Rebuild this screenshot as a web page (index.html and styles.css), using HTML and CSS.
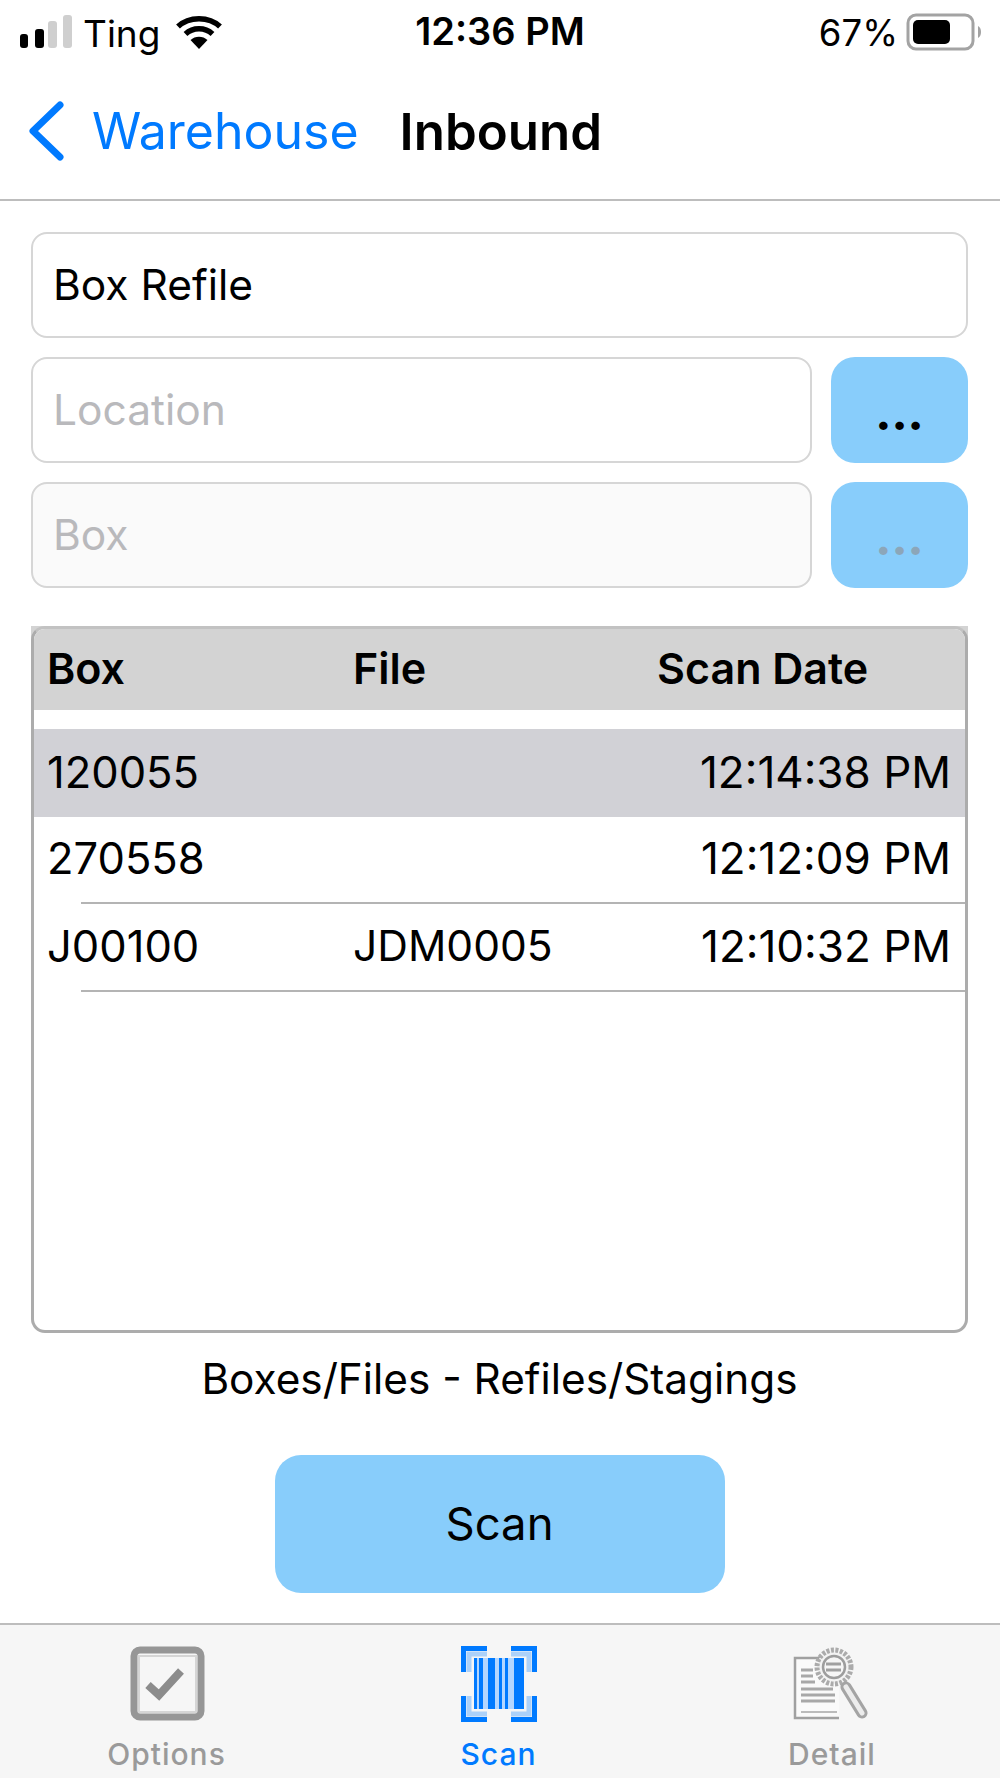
FILE: index.html
```html
<!DOCTYPE html>
<html lang="en">
<head>
<meta charset="utf-8">
<title>Inbound</title>
<link rel="stylesheet" href="styles.css">
</head>
<body>
<div class="screen">
  <header class="status">
    <div class="status-left">
      <svg class="signal" width="54" height="34" viewBox="0 0 54 34"><rect x="0" y="19" width="8" height="14" rx="3" fill="#000"/><rect x="15" y="14" width="9" height="19" rx="3" fill="#000"/><rect x="28" y="6" width="9" height="27" rx="3" fill="#cfcfcf"/><rect x="43" y="0" width="9" height="33" rx="3" fill="#cfcfcf"/></svg>
      <span class="carrier">Ting</span>
      <svg class="wifi" width="46" height="36" viewBox="0 0 46 36"><path d="M2 12.500C13 2 33 2 44 12.500" fill="none" stroke="#000" stroke-width="5.500"/><path d="M9.500 20C17 13 29 13 36.500 20" fill="none" stroke="#000" stroke-width="5.500"/><path d="M14.500 26C19 21.500 27 21.500 31.500 26L23 35Z" fill="#000"/></svg>
    </div>
    <div class="clock">12:36 PM</div>
    <div class="status-right">
      <span class="pct">67%</span>
      <svg class="battery" width="76" height="38" viewBox="0 0 76 38"><rect x="2" y="2" width="65" height="34" rx="8" fill="none" stroke="#a3a3a3" stroke-width="3"/><rect x="7" y="7" width="37" height="24" rx="5" fill="#000"/><path d="M72 13c2 1 3 3 3 6s-1 5-3 6z" fill="#a3a3a3"/></svg>
    </div>
  </header>

  <nav class="navbar">
    <svg class="chevron" width="40" height="60" viewBox="0 0 40 60"><path d="M34 4 7 30l27 26" fill="none" stroke="#007aff" stroke-width="7" stroke-linecap="round" stroke-linejoin="round"/></svg>
    <span class="back">Warehouse</span>
    <span class="title">Inbound</span>
  </nav>

  <main class="content">
    <section class="form">
      <div class="field"><span class="value">Box Refile</span></div>
      <div class="field-row">
        <div class="field grow"><span class="placeholder">Location</span></div>
        <div class="more">...</div>
      </div>
      <div class="field-row">
        <div class="field grow disabled"><span class="placeholder">Box</span></div>
        <div class="more dim">...</div>
      </div>
    </section>

    <section class="table-wrap">
      <div class="table">
        <div class="thead">
          <span>Box</span><span>File</span><span>Scan Date</span>
        </div>
        <div class="row selected">
          <div class="cells"><span>120055</span><span></span><span class="time">12:14:38 PM</span></div>
        </div>
        <div class="row">
          <div class="cells"><span>270558</span><span></span><span class="time">12:12:09 PM</span></div>
          <div class="sep"></div>
        </div>
        <div class="row">
          <div class="cells"><span>J00100</span><span class="file">JDM0005</span><span class="time">12:10:32 PM</span></div>
          <div class="sep"></div>
        </div>
      </div>
    </section>

    <p class="caption">Boxes/Files - Refiles/Stagings</p>
    <div class="scan-btn">Scan</div>
  </main>

  <footer class="tabbar">
    <div class="tab">
      <svg width="76" height="76" viewBox="0 0 76 76"><rect x="5" y="4" width="67" height="67" rx="6" fill="none" stroke="#969696" stroke-width="7"/><rect x="10" y="10" width="57" height="56" fill="none" stroke="#d5d5d5" stroke-width="2"/><path d="M19 39l11 10 22-24" fill="none" stroke="#8c8c8c" stroke-width="8"/></svg>
      <span>Options</span>
    </div>
    <div class="tab active">
      <svg width="76" height="76" viewBox="0 0 76 76"><path d="M26 2.500H2.500V26M50 2.500H73.500V26M26 73.500H2.500V50M50 73.500H73.500V50" fill="none" stroke="#007aff" stroke-width="5"/><path d="M26 8H8V26M50 8H68V26M26 68H8V50M50 68H68V50" fill="none" stroke="#007aff" stroke-opacity=".3" stroke-width="5"/><rect x="13" y="12" width="50" height="51" fill="#b3d6ff"/><g fill="#007aff"><rect x="13" y="12" width="3" height="51"/><rect x="18" y="12" width="4" height="51"/><rect x="27" y="12" width="7" height="51"/><rect x="38" y="12" width="3" height="51"/><rect x="44" y="12" width="3" height="51"/><rect x="53" y="12" width="10" height="51"/></g></svg>
      <span>Scan</span>
    </div>
    <div class="tab">
      <svg width="78" height="76" viewBox="0 0 78 76"><path d="M46 12H2v60h44" fill="#fafafa" stroke="#a0a0a0" stroke-width="2.500"/><path d="M8 24h12M8 30h12M8 36h14M8 43h32M8 49h34M8 55h34" stroke="#a8a8a8" stroke-width="3"/><path d="M8 66h36" stroke="#bbb" stroke-width="2"/><circle cx="41" cy="21" r="17" fill="#f3f3f3" stroke="#ababab" stroke-width="5" stroke-dasharray="3 1.500"/><circle cx="41" cy="21" r="11" fill="#f6f6f6" stroke="#9d9d9d" stroke-width="2.500"/><path d="M33 18h15M33 24h15" stroke="#a0a0a0" stroke-width="3"/><path d="M53 41 69 67" stroke="#a4a4a4" stroke-width="11" stroke-linecap="round"/><path d="M53 41 69 67" stroke="#ececec" stroke-width="5" stroke-linecap="round"/></svg>
      <span>Detail</span>
    </div>
  </footer>
</div>
</body>
</html>
```
FILE: styles.css
```css
* { box-sizing: border-box; }
html, body { margin: 0; padding: 0; background: #fff; }
body { font-family: Inter, "Liberation Sans", sans-serif; color: #000; }
.screen { width: 1000px; height: 1778px; display: flex; flex-direction: column; overflow: hidden; }

.status { height: 66px; flex: none; display: grid; grid-template-columns: 1fr auto 1fr; align-items: center; padding: 0 18px 0 20px; }
.status-left { display: flex; align-items: center; }
.signal { margin: -2px 0 0 0; }
.carrier { font-size: 37px; margin-left: 9px; }
.wifi { margin-left: 16px; margin-top: -2px; }
.clock { font-size: 38px; font-weight: 600; margin: 0 2px 4px 0; }
.status-right { display: flex; align-items: center; justify-content: flex-end; }
.pct { font-size: 36.500px; margin-right: 8px; }
.battery { margin-top: -3px; }

.navbar { height: 135px; flex: none; display: flex; align-items: center; border-bottom: 2px solid #bdbdbd; padding: 0 0 3px 26px; }
.chevron { flex: none; }
.back { font-size: 50px; color: #007aff; margin-left: 26px; }
.title { font-size: 51px; font-weight: 600; margin-left: 41px; }

.content { flex: 1; display: flex; flex-direction: column; padding: 31px 32px 0 31px; }
.form { display: flex; flex-direction: column; gap: 19px; }
.field-row { display: flex; gap: 19px; }
.field { height: 106px; border: 2px solid #d6d6d6; border-radius: 16px; display: flex; align-items: center; padding: 0 20px 1px; font-size: 42.500px; }
.grow { flex: 1; }
.disabled { background: #fafafa; }
.placeholder { color: #b9b9bc; }
.more { width: 137px; height: 106px; background: #88cdfb; border-radius: 24px; display: flex; align-items: flex-end; justify-content: center; padding-bottom: 27px; font-size: 46px; line-height: 1; font-weight: 800; }
.dim { color: #8ca6b9; }

.table-wrap { margin-top: 38px; height: 707px; flex: none; background: linear-gradient(#d3d3d3 16px, transparent 16px); }
.table { height: 100%; border: 3px solid #acacac; border-top-color: #c2c2c2; border-radius: 14px; background: #fff; overflow: hidden; }
.thead, .cells { display: grid; grid-template-columns: 306px 304px 1fr; padding-left: 13px; font-size: 43.500px; align-items: center; }
.thead { height: 81px; background: #d3d3d3; font-weight: 600; margin-bottom: 19px; padding-bottom: 4px; font-size: 43px; }
.row { height: 87.500px; display: flex; flex-direction: column; }
.selected { background: #d1d1d6; }
.cells { flex: 1; padding-bottom: 2px; }
.file { font-size: 42.500px; }
.time { text-align: right; padding-right: 14px; font-size: 44px; }
.sep { height: 2px; margin-left: 47px; background: #b4b4b4; flex: none; }

.caption { margin: 25px 0 0; height: 42px; line-height: 42px; font-size: 42.300px; text-align: center; }
.scan-btn { margin: 55px auto 0; width: 450px; height: 138px; border-radius: 26px; background: #88cdfb; display: flex; align-items: center; justify-content: center; font-size: 45.500px; padding-bottom: 2px; }

.tabbar { height: 155px; flex: none; border-top: 2px solid #bdbdbd; background: #f6f6f6; display: grid; grid-template-columns: 333px 331px 336px; padding-top: 21px; }
.tab { display: flex; flex-direction: column; align-items: center; color: #9a9a9a; font-size: 30px; letter-spacing: 1px; font-weight: 500; }
.tab span { margin-top: 15px; line-height: 34px; }
.tab svg { display: block; filter: blur(0.6px); }
.active { color: #007aff; }
```
